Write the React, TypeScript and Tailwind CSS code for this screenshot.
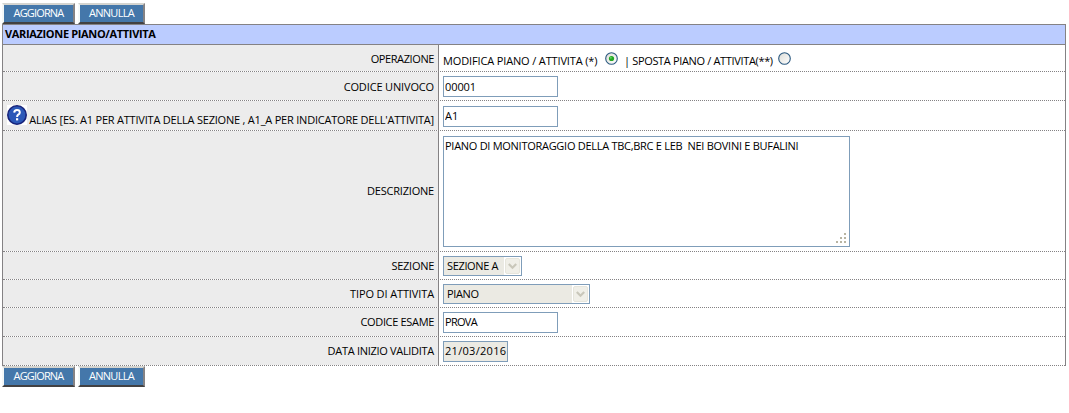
import type { ReactNode } from 'react';

function ActionButton({ label, className }: { label: string; className: string }) {
  return (
    <button
      type="button"
      className={`flex h-[21px] items-center justify-center border-2 border-t-[#d4d4d0] border-r-[#848284] border-b-[#424142] border-l-[#f4f8f8] bg-[#4477aa] pb-[2px] text-white ${className}`}
    >
      {label}
    </button>
  );
}

function Actions() {
  return (
    <div className="flex gap-[3px] pl-[2px]">
      <ActionButton label="AGGIORNA" className="w-[73px] tracking-[-0.85px]" />
      <ActionButton label="ANNULLA" className="w-[67px] tracking-[-0.7px]" />
    </div>
  );
}

function Row({ label, height, children }: { label: ReactNode; height: string; children: ReactNode }) {
  return (
    <div className={`flex border-b border-dotted border-[#848284] ${height}`}>
      <div className="flex w-[435px] shrink-0 items-center justify-end bg-[#ececec] pr-[4px]">{label}</div>
      <div className="-mb-px flex grow items-start border-l border-[#848284] pl-[4px]">{children}</div>
    </div>
  );
}

function TextField({ value, className }: { value: string; className: string }) {
  return (
    <input
      readOnly
      value={value}
      className={`h-[21px] border border-[#7f9db9] pl-[1px] outline-none ${className}`}
    />
  );
}

function SelectBox({ value, className }: { value: string; className: string }) {
  return (
    <div className={`mt-[4px] flex h-5 items-center justify-between border border-[#7f9db9] bg-[#ebeae3] pl-[3px] ${className}`}>
      <span className="pb-[1px] tracking-[-0.35px]">{value}</span>
      <span className="flex h-[18px] w-[17px] items-center justify-center border border-white bg-white">
        <svg width="15" height="16" viewBox="0 0 15 16">
          <rect x="0.5" y="0.5" width="14" height="15" rx="1.5" fill="#f0efe8" stroke="#e6e5dc" />
          <path d="M3.8 6 L7.5 9.7 L11.2 6" fill="none" stroke="#c9c7ba" strokeWidth="2.2" />
        </svg>
      </span>
    </div>
  );
}

function Radio({ checked = false }: { checked?: boolean }) {
  return (
    <svg width="13" height="13" viewBox="0 0 13 13" className="mt-[7px] shrink-0" role="radio" aria-checked={checked}>
      <defs>
        <linearGradient id="radioFill" x1="0" y1="0" x2="1" y2="1">
          <stop offset="0" stopColor="#dcdcd6" />
          <stop offset="1" stopColor="#ffffff" />
        </linearGradient>
      </defs>
      <circle cx="6.5" cy="6.5" r="5.8" fill="url(#radioFill)" stroke="#2a587f" strokeWidth="1.1" />
      {checked && <circle cx="6.5" cy="6.5" r="2.6" fill="#22a722" />}
      {checked && <circle cx="5.8" cy="5.8" r="1" fill="#5fd65f" />}
    </svg>
  );
}

function HelpIcon() {
  return (
    <svg width="20" height="20" viewBox="0 0 20 20" className="shrink-0 bg-white">
      <circle cx="10" cy="10" r="9.2" fill="#2b58b8" stroke="#17237a" strokeWidth="1.6" />
      <path d="M7.2 7.6 Q7.3 5 10 5 Q12.8 5 12.8 7.4 Q12.8 8.8 11.3 9.7 Q10.1 10.5 10.1 12" fill="none" stroke="#fff" strokeWidth="2" />
      <rect x="9" y="13.2" width="2.2" height="2.2" fill="#fff" />
    </svg>
  );
}

export default function App() {
  return (
    <main className="h-[413px] w-[1069px] overflow-hidden bg-white pt-[3px] font-['Open_Sans','Noto_Sans',sans-serif] text-[11px] leading-[15px] whitespace-pre text-black">
      <Actions />
      <div className="ml-[2px] w-[1064px] border-x border-t border-[#848284]">
        <div className="flex h-5 items-center border-b border-[#848284] bg-[#bbccff] pb-[2px] pl-[2px] font-bold">
          <span className="tracking-[-0.34px]">VARIAZIONE PIANO/ATTIVITA</span>
        </div>
        <Row label={<span className="tracking-[-0.4px]">OPERAZIONE</span>} height="h-[27px]">
          <span className="mt-[8px] w-[162px] tracking-[-0.14px]">MODIFICA PIANO / ATTIVITA (*)</span>
          <Radio checked />
          <span className="mt-[8px] ml-[6px] w-[154px] tracking-[-0.34px]">| SPOSTA PIANO / ATTIVITA(**)</span>
          <Radio />
        </Row>
        <Row label={<span className="tracking-[-0.15px]">CODICE UNIVOCO</span>} height="h-[29px]">
          <TextField value="00001" className="mt-[4px] w-[115px] tracking-[-0.1px]" />
        </Row>
        <Row
          height="h-[30px]"
          label={
            <div className="flex w-[427px] items-start justify-between">
              <HelpIcon />
              <span className="mt-[7px] tracking-[-0.21px]">ALIAS [ES. A1 PER ATTIVITA DELLA SEZIONE , A1_A PER INDICATORE DELL'ATTIVITA]</span>
            </div>
          }
        >
          <TextField value="A1" className="mt-[5px] w-[115px] pb-[2px]" />
        </Row>
        <Row label={<span className="pb-[2px] tracking-[-0.2px]">DESCRIZIONE</span>} height="h-[121px]">
          <div className="mt-[5px] flex h-[111px] w-[407px] items-start justify-between border border-[#7f9db9] pt-[1px] pl-[1px]">
            <span className="tracking-[-0.28px]">PIANO DI MONITORAGGIO DELLA TBC,BRC E LEB  NEI BOVINI E BUFALINI</span>
            <svg width="10" height="10" viewBox="0 0 10 10" fill="#b8b4a2" className="mr-[3px] mb-[3px] self-end">
              <path d="M8 0h2v2h-2zM4 4h2v2h-2zM8 4h2v2h-2zM0 8h2v2h-2zM4 8h2v2h-2zM8 8h2v2h-2z" />
            </svg>
          </div>
        </Row>
        <Row label={<span className="tracking-[-0.28px]">SEZIONE</span>} height="h-[28px]">
          <SelectBox value="SEZIONE A" className="w-[79px]" />
        </Row>
        <Row label={<span className="tracking-[-0.12px]">TIPO DI ATTIVITA</span>} height="h-[28px]">
          <SelectBox value="PIANO" className="w-[147px]" />
        </Row>
        <Row label={<div className="pb-[1px] tracking-[-0.33px]">CODICE ESAME</div>} height="h-[29px]">
          <TextField value="PROVA" className="mt-[4px] w-[115px] pb-[2px] tracking-[-0.7px]" />
        </Row>
        <Row label={<div className="pb-[1px] tracking-[-0.3px]">DATA INIZIO VALIDITA</div>} height="h-[29px]">
          <TextField value="21/03/2016" className="mt-[4px] w-[65px] bg-[#ebeae3] pb-[2px] tracking-[0.3px]" />
        </Row>
      </div>
      <Actions />
    </main>
  );
}
